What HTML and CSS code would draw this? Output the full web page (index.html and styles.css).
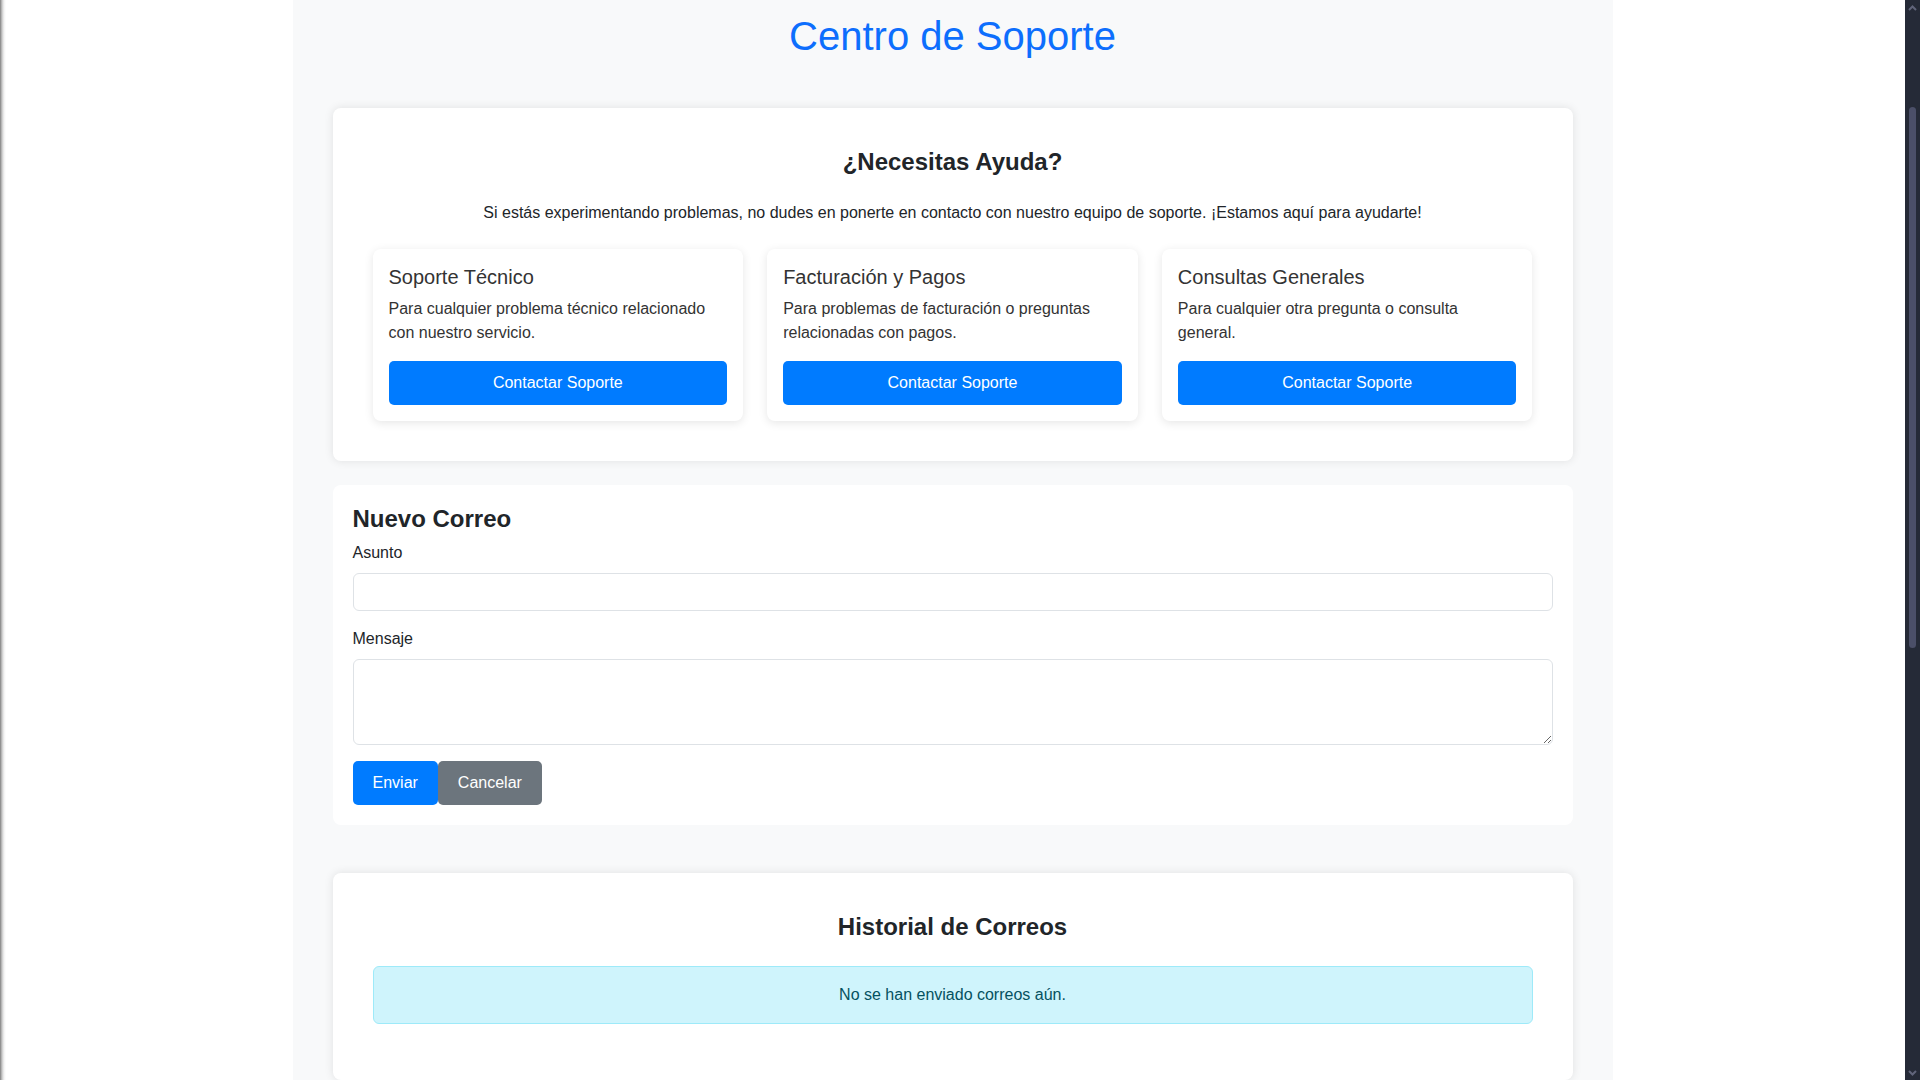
FILE: index.html
```html
<!DOCTYPE html>
<html lang="es">
<head>
<meta charset="utf-8">
<title>Centro de Soporte</title>
<link rel="stylesheet" href="styles.css">
</head>
<body>
<div class="screen">
  <main class="viewport">
    <div class="container">
      <h1 class="page-title">Centro de Soporte</h1>

      <section class="card card-help">
        <h2 class="card-heading center">¿Necesitas Ayuda?</h2>
        <p class="intro">Si estás experimentando problemas, no dudes en ponerte en contacto con nuestro equipo de soporte. ¡Estamos aquí para ayudarte!</p>
        <div class="options">
          <div class="option">
            <h3 class="option-title">Soporte Técnico</h3>
            <p class="option-text">Para cualquier problema técnico relacionado con nuestro servicio.</p>
            <button class="btn btn-primary btn-block" type="button">Contactar Soporte</button>
          </div>
          <div class="option">
            <h3 class="option-title">Facturación y Pagos</h3>
            <p class="option-text">Para problemas de facturación o preguntas relacionadas con pagos.</p>
            <button class="btn btn-primary btn-block" type="button">Contactar Soporte</button>
          </div>
          <div class="option">
            <h3 class="option-title">Consultas Generales</h3>
            <p class="option-text">Para cualquier otra pregunta o consulta general.</p>
            <button class="btn btn-primary btn-block" type="button">Contactar Soporte</button>
          </div>
        </div>
      </section>

      <section class="card card-form">
        <h2 class="card-heading form-heading">Nuevo Correo</h2>
        <form class="mail-form">
          <label class="field-label" for="asunto">Asunto</label>
          <input class="field-input" id="asunto" type="text">
          <label class="field-label" for="mensaje">Mensaje</label>
          <textarea class="field-input field-textarea" id="mensaje" rows="3"></textarea>
          <div class="actions"><button class="btn btn-primary" type="button">Enviar</button><button class="btn btn-secondary" type="button">Cancelar</button></div>
        </form>
      </section>

      <section class="card card-history">
        <h2 class="card-heading center history-heading">Historial de Correos</h2>
        <div class="alert-info">No se han enviado correos aún.</div>
      </section>
    </div>
  </main>
  <div class="scrollbar" aria-hidden="true">
    <span class="sb-arrow">
      <svg width="9" height="6" viewBox="0 0 9 6"><path d="M1 5 L4.5 1.5 L8 5" fill="none" stroke="#60647a" stroke-width="2"/></svg>
    </span>
    <div class="sb-track"><div class="sb-thumb"></div></div>
    <span class="sb-arrow">
      <svg width="9" height="6" viewBox="0 0 9 6"><path d="M1 1 L4.5 4.5 L8 1" fill="none" stroke="#60647a" stroke-width="2"/></svg>
    </span>
  </div>
</div>
</body>
</html>
```

FILE: styles.css
```css
* { box-sizing: border-box; }

html, body {
  margin: 0;
  height: 100%;
  overflow: hidden;
}

body {
  font-family: "Liberation Sans", Arial, sans-serif;
  font-size: 16px;
  line-height: 1.5;
  color: #212529;
  background: #ffffff;
}

.screen {
  display: flex;
  height: 100vh;
  overflow: hidden;
}

.viewport {
  flex: 1;
  min-width: 0;
  overflow: hidden;
  background:
    linear-gradient(to right, rgba(0, 0, 0, 0.5) 0, rgba(0, 0, 0, 0.22) 2px, rgba(0, 0, 0, 0.05) 4px, rgba(0, 0, 0, 0) 6px),
    #ffffff;
}

.scrollbar {
  width: 15px;
  flex: none;
  background: #252a37;
  display: flex;
  flex-direction: column;
  align-items: center;
}

.sb-arrow {
  height: 15px;
  display: flex;
  align-items: center;
  justify-content: center;
  flex: none;
}

.sb-track {
  flex: 1;
  display: flex;
  flex-direction: column;
  align-items: center;
}

.sb-thumb {
  width: 7px;
  height: 541px;
  margin-top: 92px;
  border-radius: 4px;
  background: #4b4f68;
}

.container {
  width: 1320px;
  margin: 0 auto;
  background: #f8f9fa;
  padding: 12px 40px 200px;
}

.page-title {
  margin: 0 0 48px;
  font-size: 40px;
  font-weight: 400;
  line-height: 48px;
  color: #0d6efd;
  text-align: center;
}

.card {
  background: #ffffff;
  border-radius: 8px;
}

.card-help {
  padding: 40px;
  box-shadow: 0 0 10px rgba(0, 0, 0, 0.1);
}

.card-form {
  margin-top: 24px;
  padding: 20px;
}

.card-history {
  margin-top: 48px;
  padding: 40px;
  box-shadow: 0 0 10px rgba(0, 0, 0, 0.1);
}

.card-heading {
  margin: 0 0 24px;
  font-size: 24px;
  font-weight: 700;
  line-height: 1.2;
  color: #212529;
}

.center { text-align: center; }

.form-heading { margin-bottom: 7px; }

.history-heading { margin-bottom: 25px; }

.intro {
  margin: 0 0 24px;
  text-align: center;
}

.options {
  display: grid;
  grid-template-columns: repeat(3, 1fr);
  gap: 24px;
}

.option {
  background: #ffffff;
  border-radius: 8px;
  padding: 16px;
  box-shadow: 0 2px 10px rgba(0, 0, 0, 0.1);
  display: flex;
  flex-direction: column;
}

.option-title {
  margin: 0 0 8px;
  font-size: 20px;
  font-weight: 400;
  line-height: 24px;
  color: #333333;
}

.option-text {
  margin: 0 0 16px;
  color: #333333;
}

.btn {
  font-family: inherit;
  font-size: 16px;
  line-height: 24px;
  border: none;
  border-radius: 5px;
  padding: 10px 20px;
  color: #ffffff;
  cursor: pointer;
}

.btn-primary { background: #007bff; }
.btn-secondary { background: #6c757d; }

.btn-block {
  width: 100%;
  margin-top: auto;
}

.mail-form {
  display: flex;
  flex-direction: column;
}

.field-label {
  margin-bottom: 8px;
  color: #212529;
}

.field-input {
  display: block;
  width: 100%;
  height: 38px;
  margin: 0 0 16px;
  padding: 6px 12px;
  font-family: inherit;
  font-size: 16px;
  line-height: 24px;
  border: 1px solid #dee2e6;
  border-radius: 6px;
  background: #ffffff;
  color: #212529;
}

.field-textarea {
  height: 86px;
  resize: vertical;
}

.actions {
  display: flex;
}

.alert-info {
  margin-bottom: 16px;
  padding: 16px;
  text-align: center;
  background: #cff4fc;
  border: 1px solid #9eeaf9;
  border-radius: 6px;
  color: #055160;
}
```
